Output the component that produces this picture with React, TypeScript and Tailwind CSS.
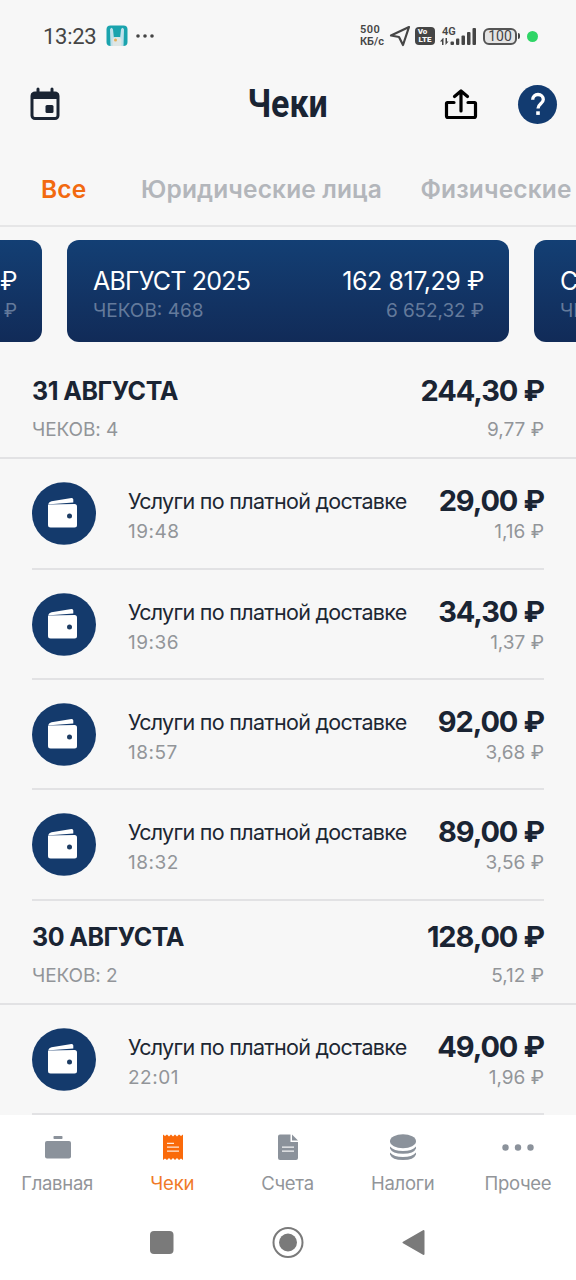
import type { ReactNode } from "react";

type Receipt = { title: string; time: string; amount: string; tax: string };
type Day = { date: string; count: number; amount: string; tax: string; receipts: Receipt[] };

const SERVICE = "Услуги по платной доставке";

const DAYS: Day[] = [
  {
    date: "31 АВГУСТА",
    count: 4,
    amount: "244,30 ₽",
    tax: "9,77 ₽",
    receipts: [
      { title: SERVICE, time: "19:48", amount: "29,00 ₽", tax: "1,16 ₽" },
      { title: SERVICE, time: "19:36", amount: "34,30 ₽", tax: "1,37 ₽" },
      { title: SERVICE, time: "18:57", amount: "92,00 ₽", tax: "3,68 ₽" },
      { title: SERVICE, time: "18:32", amount: "89,00 ₽", tax: "3,56 ₽" },
    ],
  },
  {
    date: "30 АВГУСТА",
    count: 2,
    amount: "128,00 ₽",
    tax: "5,12 ₽",
    receipts: [{ title: SERVICE, time: "22:01", amount: "49,00 ₽", tax: "1,96 ₽" }],
  },
];

function StatusBar() {
  return (
    <div className="flex h-[72px] shrink-0 items-center pl-[43px] pr-[38px] font-['Roboto',sans-serif] text-[#454545]">
      <span className="pt-px text-[22px] leading-none tracking-[-0.3px]">13:23</span>
      <svg className="ml-[10px]" width="22" height="22" viewBox="0 0 22 22">
        <rect x="0.5" y="0.5" width="21" height="20.5" rx="4" fill="#1aa3ad" />
        <path d="M4 4.500q1.500-3.500 3 0L7.800 12h6.400L15 4.500q1.500-3.500 3 0L17.500 21h-13z" fill="#bfe0ea" />
        <path d="M6.600 14q1-2 4.400-2t4.400 2v7H6.600z" fill="#dfe6e4" />
        <circle cx="9.500" cy="15" r="1.500" fill="#e6ae57" />
      </svg>
      <svg className="ml-[7px]" width="20" height="6" viewBox="0 0 20 6" fill="#454545">
        <circle cx="3" cy="3" r="1.800" />
        <circle cx="10" cy="3" r="1.800" />
        <circle cx="17" cy="3" r="1.800" />
      </svg>
      <div className="ml-auto flex items-center">
        <div className="w-[29px] text-[11px] font-semibold leading-[12px]">
          <div className="tracking-[0.5px]">500</div>
          <div className="whitespace-nowrap">КБ/с</div>
        </div>
        <svg width="22" height="22" viewBox="0 0 22 22" fill="none" stroke="#454545" strokeWidth="2.200" strokeLinejoin="round">
          <path d="M20 2 2 10.500 10 12 14 20z" />
        </svg>
        <div className="ml-[4px] flex h-[18px] w-[20px] flex-col items-center justify-center rounded-[4px] bg-[#454545] text-[8px] font-black leading-[8px] text-[#f7f7f7]">
          <span className="-ml-[5px]">Vo</span>
          <span>LTE</span>
        </div>
        <svg className="ml-[5px]" width="38" height="20" viewBox="0 0 38 20" fill="#454545">
          <text x="2" y="8.500" fontSize="11" fontWeight="600" fontFamily="Roboto">4G</text>
          <path d="M3 12 0 15.500H2V19h1.500V12zM5.500 12v7L8.500 15.500H7V12z" />
          <rect x="10.500" y="15.500" width="3.500" height="3.500" rx="1" />
          <rect x="16" y="12.500" width="3.300" height="6.500" rx="1" />
          <rect x="21.500" y="9.500" width="3.500" height="9.500" rx="1" />
          <rect x="27" y="6" width="3.500" height="13" rx="1" />
          <rect x="32.500" y="2" width="3.500" height="17" rx="1" />
        </svg>
        <div className="ml-[5px] flex h-[17px] w-[34px] items-center justify-center rounded-[6px] border-2 border-[#555] bg-[#e4e4e4] text-[14px] leading-none">
          100
        </div>
        <div className="ml-px h-[6px] w-[2px] rounded-r-sm bg-[#454545]" />
        <div className="ml-[7px] size-[11px] rounded-full bg-[#2fd566]" />
      </div>
    </div>
  );
}

function Header() {
  return (
    <div className="grid h-[64px] shrink-0 grid-cols-[1fr_auto_1fr] items-center px-[19px]">
      <svg className="ml-[10px]" width="32" height="34" viewBox="0 0 32 34" fill="none">
        <path d="M9 2v5M23 2v5" stroke="#1a2433" strokeWidth="3" strokeLinecap="round" />
        <rect x="3" y="6" width="26" height="25.500" rx="3" stroke="#1a2433" strokeWidth="3" />
        <path d="M2 6.500h28v5.500H2z" fill="#1a2433" />
        <rect x="16.500" y="18" width="8" height="8" rx="1.500" fill="#1a2433" />
      </svg>
      <h1 className="scale-x-[0.86] font-['Roboto',sans-serif] text-[39.5px] font-bold leading-none text-[#1a2433]">
        Чеки
      </h1>
      <div className="flex items-center justify-end gap-[40px]">
        <svg width="34" height="32" viewBox="0 0 34 32" fill="none" stroke="#000" strokeWidth="3.200" strokeLinecap="round" strokeLinejoin="round">
          <path d="M10 14.500H3.500Q2.500 14.500 2.500 15.500V28Q2.500 29.500 4 29.500H30Q31.500 29.500 31.500 28V15.500Q31.500 14.500 30.500 14.500H24" />
          <path d="M17 23V3.500M10.500 8.500 17 3 23.500 8.500" />
        </svg>
        <div className="flex size-[39px] items-center justify-center rounded-full bg-[#123b70]">
          <svg width="16" height="24" viewBox="0 0 16 24" fill="none">
            <path d="M2.700 7.800C2.700 4.500 5 2.500 8 2.500s5.300 2 5.300 5c0 4.200-5.300 4.500-5.300 9" stroke="#fff" strokeWidth="3.300" />
            <rect x="6.200" y="19.300" width="3.600" height="3.600" fill="#fff" />
          </svg>
        </div>
      </div>
    </div>
  );
}

function Tabs() {
  return (
    <div className="flex h-[91px] shrink-0 items-center overflow-hidden whitespace-nowrap border-b-2 border-[#e6e6e7] pl-[41px] pt-[18px] text-[24.5px] font-semibold leading-none tracking-[0.14px] text-[#b3b6bb]">
      <span className="w-[100px] shrink-0 text-[#f26a10]">Все</span>
      <span className="w-[279.5px] shrink-0">Юридические лица</span>
      <span className="shrink-0">Физические лица</span>
    </div>
  );
}

function MonthCard({ month, count, total, tax }: { month: string; count: string; total: string; tax: string }) {
  return (
    <div className="flex h-[102px] w-[442px] shrink-0 justify-between rounded-[12px] bg-linear-to-b from-[#133f74] to-[#112b58] pl-[26px] pr-[25px] pt-[25px]">
      <div>
        <div className="text-[25px] leading-[32px] tracking-[-0.8px] text-white">{month}</div>
        <div className="mt-px text-[19px] leading-[26px] text-[#647a9b]">{count}</div>
      </div>
      <div className="text-right">
        <div className="text-[25px] leading-[32px] tracking-[-0.45px] text-white">{total}</div>
        <div className="mt-px text-[19px] leading-[26px] tracking-[-0.1px] text-[#647a9b]">{tax}</div>
      </div>
    </div>
  );
}

function Months() {
  return (
    <div className="flex h-[128px] shrink-0 justify-center gap-[25px] overflow-hidden pt-[13px]">
      <MonthCard month="ИЮЛЬ 2025" count="ЧЕКОВ: 412" total="148 305,10 ₽" tax="5 932,20 ₽" />
      <MonthCard month="АВГУСТ 2025" count="ЧЕКОВ: 468" total="162 817,29 ₽" tax="6 652,32 ₽" />
      <MonthCard month="СЕНТЯБРЬ 2025" count="ЧЕКОВ: 35" total="12 480,00 ₽" tax="499,20 ₽" />
    </div>
  );
}

function WalletIcon() {
  return (
    <svg className="shrink-0" width="64" height="63" viewBox="0 0 64 63">
      <ellipse cx="32" cy="31.500" rx="32" ry="31.300" fill="#143a6c" />
      <path d="M16.300 22Q17 19.600 19.500 19.200L39.500 15.900Q41.300 15.800 41.300 17.500V20.600L18 22.300z" fill="#fff" />
      <path d="M16 22.500 42.500 22Q45 22 45 24.500V43Q45 45.500 42.500 45.500H18.500Q16 45.500 16 43z" fill="#fff" />
      <circle cx="37.500" cy="34" r="2.500" fill="#1d3c63" />
    </svg>
  );
}

function Amount({ children }: { children: ReactNode }) {
  return (
    <div className="text-[29px] font-bold leading-[32px] tracking-[-1.1px] text-[#1a2433] [word-spacing:0.5px]">
      {children}
    </div>
  );
}

function ReceiptRow({ receipt }: { receipt: Receipt }) {
  return (
    <div className="mx-8 flex h-[110.4px] border-b-2 border-[#e2e2e4]">
      <div className="pt-[23px]">
        <WalletIcon />
      </div>
      <div className="ml-8 whitespace-nowrap pt-[26px]">
        <div className="text-[21.5px] leading-[32px] tracking-[-0.7px] text-[#1d2733]">{receipt.title}</div>
        <div className="text-[19px] leading-[29px] tracking-[0.5px] text-[#929599]">{receipt.time}</div>
      </div>
      <div className="ml-auto whitespace-nowrap pt-[26px] text-right">
        <Amount>{receipt.amount}</Amount>
        <div className="text-[19px] leading-[29px] text-[#929599]">{receipt.tax}</div>
      </div>
    </div>
  );
}

function DaySection({ day }: { day: Day }) {
  return (
    <section>
      <div className="flex h-[104.2px] justify-between border-b-2 border-[#e2e2e4] px-8 pt-[20px]">
        <div>
          <div className="text-[25px] font-bold leading-[32px] tracking-[-0.4px] text-[#1a2433] [word-spacing:-0.5px]">
            {day.date}
          </div>
          <div className="mt-[10px] text-[19px] leading-[26px] tracking-[-0.1px] text-[#929599]">ЧЕКОВ: {day.count}</div>
        </div>
        <div className="text-right">
          <Amount>{day.amount}</Amount>
          <div className="mt-[10px] text-[19px] leading-[26px] text-[#929599]">{day.tax}</div>
        </div>
      </div>
      {day.receipts.map((r) => (
        <ReceiptRow key={r.time} receipt={r} />
      ))}
    </section>
  );
}

function NavItem({ label, active, children }: { label: string; active?: boolean; children: ReactNode }) {
  return (
    <div className="flex flex-1 flex-col items-center">
      <svg width="32" height="28" viewBox="0 0 32 28" fill={active ? "#fa6a0a" : "#8b929b"}>
        {children}
      </svg>
      <span
        className={
          active
            ? "mt-[8px] pr-px text-[18.5px] leading-[28px] tracking-[-0.2px] text-[#f07a28]"
            : "mt-[8px] pr-px text-[18.5px] leading-[28px] tracking-[-0.3px] text-[#929599]"
        }
      >
        {label}
      </span>
    </div>
  );
}

function BottomNav() {
  return (
    <div className="flex h-[88px] shrink-0 pt-[18px]">
      <NavItem label="Главная">
        <rect x="11.500" y="3" width="9" height="3" rx="0.800" />
        <rect x="3" y="8" width="26" height="17.500" rx="2" />
      </NavItem>
      <NavItem label="Чеки" active>
        <path d="M6 1.500 8 3 10 1.500 12 3.500 14 1.500 16 3.500 18 1.500 20 3.500 22 1.500 24 3 26 1.500V27L24 25.500 22 27 20 25 18 27 16 25 14 27 12 25 10 27 8 25.500 6 27z" />
        <path d="M10 10.300h7M10 14.200h12M10 18.100h12" stroke="#fff" strokeOpacity="0.850" strokeWidth="1.200" />
      </NavItem>
      <NavItem label="Счета">
        <path d="M8 1.500H18.500V9H26V25Q26 27 24 27H8Q6 27 6 25V3.500Q6 1.500 8 1.500z" />
        <path d="M20 1.500 26 7.500H20z" />
        <path d="M10 14.200h12M10 18.100h12" stroke="#fff" strokeOpacity="0.900" strokeWidth="1.200" />
      </NavItem>
      <NavItem label="Налоги">
        <ellipse cx="16" cy="8.300" rx="13" ry="7" />
        <path d="M3 13.500Q7 18 16 18T29 13.500V15.500Q27 20.800 16 20.800T3 15.500z" />
        <path d="M3 19.500Q7 24 16 24T29 19.500V21.500Q27 27 16 27T3 21.500z" />
      </NavItem>
      <NavItem label="Прочее">
        <circle cx="3.500" cy="14.500" r="3.200" />
        <circle cx="16" cy="14.500" r="3.200" />
        <circle cx="28.500" cy="14.500" r="3.200" />
      </NavItem>
    </div>
  );
}

function SystemNav() {
  return (
    <div className="flex flex-1 items-start justify-between px-[146px] pt-[24px]">
      <svg width="32" height="32" viewBox="0 0 32 32">
        <rect x="4" y="4" width="23.500" height="23" rx="4" fill="#7a7a7a" />
      </svg>
      <svg width="32" height="32" viewBox="0 0 32 32">
        <circle cx="16" cy="15.500" r="14.500" fill="none" stroke="#7a7a7a" strokeWidth="2" />
        <circle cx="16" cy="15.500" r="9" fill="#7a7a7a" />
      </svg>
      <svg width="32" height="32" viewBox="0 0 32 32">
        <path d="M5.500 15.500 25.500 4V27z" fill="#7a7a7a" stroke="#7a7a7a" strokeWidth="2" strokeLinejoin="round" />
      </svg>
    </div>
  );
}

export default function App() {
  return (
    <div className="flex h-[1280px] w-[576px] flex-col overflow-hidden bg-[#f7f7f7] font-['Inter',sans-serif]">
      <StatusBar />
      <Header />
      <Tabs />
      <Months />
      <main className="h-[760px] shrink-0 overflow-hidden">
        {DAYS.map((day) => (
          <DaySection key={day.date} day={day} />
        ))}
      </main>
      <div className="flex flex-1 flex-col bg-white">
        <BottomNav />
        <SystemNav />
      </div>
    </div>
  );
}
